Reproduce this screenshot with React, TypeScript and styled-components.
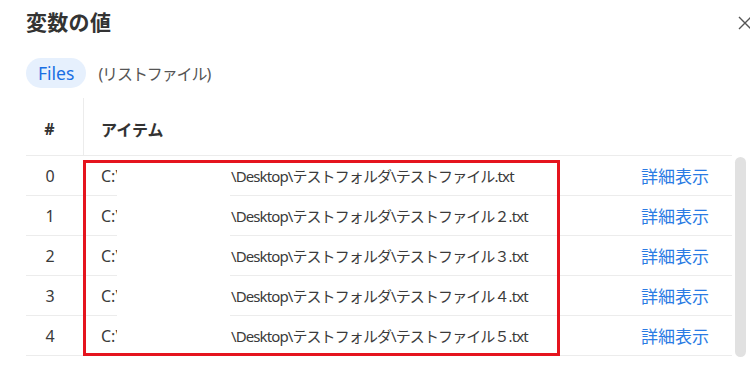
import React from "react";
import styled, { createGlobalStyle } from "styled-components";

const Global = createGlobalStyle`
  html, body { margin: 0; padding: 0; background: #fff; overflow: hidden; }
  body { font-family: "Noto Sans", "Noto Sans CJK JP", sans-serif; color: #333; }
`;

const Dialog = styled.div`
  width: 750px;
  height: 373px;
  box-sizing: border-box;
  padding: 10px 0 0 26px;
  display: flex;
  flex-direction: column;
`;

const TitleBar = styled.div`
  display: flex;
  align-items: center;
  justify-content: space-between;
  height: 24px;
`;

const Title = styled.h1`
  margin: 0;
  font-size: 21px;
  font-weight: 700;
  line-height: 24px;
  color: #333;
  letter-spacing: 0.3px;
`;

const CloseIcon = styled.svg`
  width: 14px;
  height: 14px;
  margin-right: -2px;
  margin-top: 2px;
  color: #555;
`;

const ChipRow = styled.div`
  display: flex;
  align-items: center;
  gap: 12px;
  margin-top: 24px;
`;

const Chip = styled.span`
  display: inline-flex;
  align-items: center;
  height: 30px;
  padding: 0 12px;
  border-radius: 15px;
  background: #e6f0fd;
  color: #1a6fe3;
  font-size: 17.5px;
`;

const ChipLabel = styled.span`
  font-size: 16px;
  letter-spacing: -1.1px;
  color: #555;
`;

const TableArea = styled.div`
  display: flex;
  align-items: flex-start;
  margin-top: 10px;
`;

const Table = styled.div`
  position: relative;
  width: 706px;
`;

const HeaderRow = styled.div`
  display: grid;
  grid-template-columns: 58px 1fr;
  height: 58px;
  box-sizing: border-box;
  border-bottom: 1px solid #ececec;
`;

const HeadCell = styled.div<{ $center?: boolean; $divider?: boolean }>`
  display: flex;
  align-items: center;
  padding-top: 5px;
  justify-content: ${(p) => (p.$center ? "center" : "flex-start")};
  padding-left: ${(p) => (p.$center ? "0" : "17px")};
  padding-right: ${(p) => (p.$center ? "10px" : "0")};
  border-right: ${(p) => (p.$divider ? "1px solid #ececec" : "none")};
  font-size: 16px;
  font-weight: 700;
  color: #333;
`;

const Row = styled.div`
  display: grid;
  grid-template-columns: 58px 1fr auto;
  height: 40px;
  box-sizing: border-box;
  border-bottom: 1px solid #ececec;
  align-items: center;
  font-size: 16px;
  color: #3a3a3a;
`;

const IndexCell = styled.div`
  text-align: center;
  padding-right: 10px;
`;

const PathCell = styled.div`
  display: flex;
  align-items: center;
  padding-left: 17px;
  white-space: nowrap;
`;

const Drive = styled.span`
  display: inline-block;
  width: 16px;
  overflow: hidden;
`;

const PathRest = styled.span`
  margin-left: 114px;
  font-size: 15px;
  letter-spacing: -0.9px;
`;

const DetailLink = styled.a`
  padding-right: 23px;
  color: #2a7be4;
  font-size: 17px;
  text-decoration: none;
  cursor: pointer;
`;

const Mask = styled.div`
  position: absolute;
  left: 91px;
  top: 64px;
  width: 113px;
  height: 193px;
  background: #fff;
`;

const Annotation = styled.div`
  position: absolute;
  left: 57px;
  top: 62px;
  width: 477px;
  height: 196px;
  box-sizing: border-box;
  border: 3px solid #e5141e;
  pointer-events: none;
`;

const Scrollbar = styled.div`
  width: 11px;
  height: 200px;
  margin-left: 3px;
  margin-top: 59px;
  border-radius: 6px;
  background: #e1e1e1;
`;

const suffixes = ["", "２", "３", "４", "５"];

export default function App() {
  return (
    <>
      <Global />
      <Dialog>
        <TitleBar>
          <Title>変数の値</Title>
          <CloseIcon viewBox="0 0 14 14" fill="none" stroke="currentColor" strokeWidth="1.4">
            <path d="M1 1 L13 13 M13 1 L1 13" />
          </CloseIcon>
        </TitleBar>
        <ChipRow>
          <Chip>Files</Chip>
          <ChipLabel>(リストファイル)</ChipLabel>
        </ChipRow>
        <TableArea>
          <Table>
            <HeaderRow>
              <HeadCell $center $divider>#</HeadCell>
              <HeadCell>アイテム</HeadCell>
            </HeaderRow>
            {suffixes.map((s, i) => (
              <Row key={i}>
                <IndexCell>{i}</IndexCell>
                <PathCell>
                  <Drive>C:\Users</Drive>
                  <PathRest>{`\\Desktop\\テストフォルダ\\テストファイル${s}.txt`}</PathRest>
                </PathCell>
                <DetailLink>詳細表示</DetailLink>
              </Row>
            ))}
            <Mask />
            <Annotation />
          </Table>
          <Scrollbar />
        </TableArea>
      </Dialog>
    </>
  );
}
